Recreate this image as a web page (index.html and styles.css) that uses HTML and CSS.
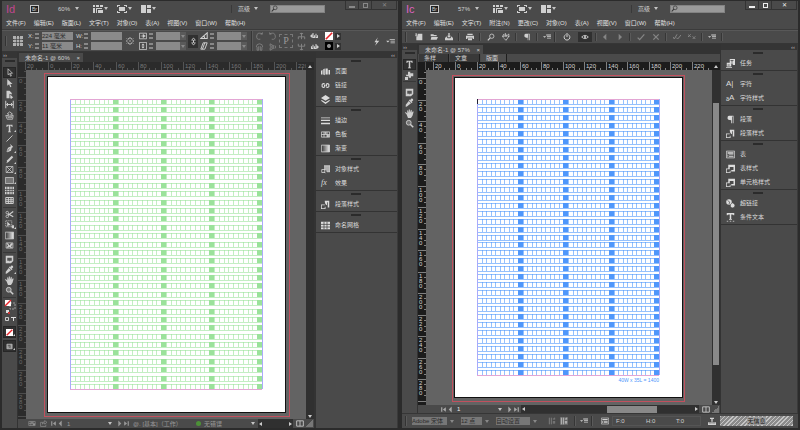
FILE: index.html
```html
<!DOCTYPE html>
<html lang="zh-CN">
<head>
<meta charset="utf-8">
<title>未命名-1</title>
<link rel="stylesheet" href="styles.css">
</head>
<body>
<svg class="sprite" aria-hidden="true">
  <symbol id="views" viewBox="0 0 10 10"><path d="M0 1h2v2H0zM3 1h3v2H3zM7 1h3v2H7zM0 4h2v5H0zM3 4h6v1H4v4H3zM5 6h5v3H5z" fill="currentColor"/></symbol>
  <symbol id="screen" viewBox="0 0 10 10"><path d="M2 3h6v4H2zM0 1h3v1H1v1H0zM7 1h3v2H9V2H7zM0 7h1v1h2v1H0zM9 7h1v2H7V8h2z" fill="currentColor"/></symbol>
  <symbol id="arrange" viewBox="0 0 10 10"><path d="M0 1h5v8H0zM6 1h4v3H6zM6 5h4v4H6z" fill="currentColor"/></symbol>
  <symbol id="search" viewBox="0 0 10 10"><circle cx="6" cy="4" r="2.7" fill="none" stroke="currentColor"/><path d="M4 6L1 9.3" stroke="currentColor" stroke-width="1.5"/></symbol>
  <symbol id="refpoint" viewBox="0 0 10 12"><path d="M2 3h6v6H2zM5 3v6M2 6h6" fill="none" stroke="currentColor" stroke-width=".6"/><path d="M0 1h3v3H0zM4 1h2v3H4zM7 1h3v3H7zM0 5h3v2H0zM7 5h3v2H7zM0 8h3v3H0zM4 8h2v3H4zM7 8h3v3H7zM4 5h2v2H4z" fill="currentColor"/></symbol>
  <symbol id="link" viewBox="0 0 10 10"><path d="M3 3V2q2-2 4 0v1M3 7v1q2 2 4 0V7M0 5h2M8 5h2M1 2l1 1M9 2L8 3M1 8l1-1M9 8L8 7M5 4v2" fill="none" stroke="currentColor" stroke-width="1.1"/></symbol>
  <symbol id="chain" viewBox="0 0 10 12"><path d="M3 5V3q2-3 4 0v2M3 7v2q2 3 4 0V7M5 4v4" fill="none" stroke="currentColor" stroke-width="1.4"/></symbol>
  <symbol id="scalex" viewBox="0 0 10 10"><path d="M.5 1.500h9v7h-9z" fill="none" stroke="currentColor"/><path d="M2 5h3V3l3 2-3 2V5" fill="currentColor" stroke="currentColor" stroke-width=".8"/></symbol>
  <symbol id="scaley" viewBox="0 0 10 10"><path d="M.5 .5h9v9h-9z" fill="none" stroke="currentColor"/><path d="M5 2l2 2H3zM5 8l2-2H3zM4.500 4h1v2h-1z" fill="currentColor"/></symbol>
  <symbol id="angle" viewBox="0 0 10 10"><path d="M9 1v7H1zM6 8L5 5" fill="none" stroke="currentColor" stroke-width="1.3"/></symbol>
  <symbol id="shear" viewBox="0 0 10 10"><path d="M4 1h5L6 9H1zM6 1L3 9" fill="none" stroke="currentColor" stroke-width="1.2"/></symbol>
  <symbol id="rotate" viewBox="0 0 10 10"><path d="M8 2Q2 0 1.500 5T6 9" fill="none" stroke="currentColor"/><path d="M6 3h3V0z" fill="currentColor"/></symbol>
  <symbol id="fliph" viewBox="0 0 10 10"><path d="M1 5q0-4 4-4t4 4M2 5v4h2V4M8 5v4H6V4" fill="none" stroke="currentColor"/></symbol>
  <symbol id="flipv" viewBox="0 0 10 10"><path d="M2 1l5 3-5 0zM2 9l5-3H2zM8 3q2 2 0 4" fill="none" stroke="currentColor"/></symbol>
  <symbol id="tree" viewBox="0 0 10 10"><path d="M5 1v4M1 9V6h8v3M5 5v4M3 2h4" fill="none" stroke="currentColor" stroke-width="1.200"/></symbol>
  <symbol id="next" viewBox="0 0 12 10"><path d="M1 5h3M4 1v6h2V4M8 2v5h2V4M3 3L1 5l2 2" fill="none" stroke="currentColor" stroke-width="1.4"/></symbol>
  <symbol id="bolt" viewBox="0 0 10 12"><path d="M7 0L2 7h3l-2 5 6-7H5z" fill="currentColor"/></symbol>
  <symbol id="menu" viewBox="0 0 10 8"><path d="M0 3h4L2 5zM4 1h6v1H4zM5 3h5v1H5zM5 5h5v1H5z" fill="currentColor"/></symbol>
  <symbol id="none" viewBox="0 0 10 10"><path d="M0 0h10v10H0z" fill="#fff"/><path d="M1 9L9 1" stroke="#e8242a" stroke-width="2"/></symbol>
  <symbol id="stroke" viewBox="0 0 10 10"><path d="M0 0h10v10H0z" fill="#000"/><path d="M3.500 3.500h3v3h-3z" fill="#555" stroke="#ddd"/></symbol>
  <symbol id="select" viewBox="0 0 10 12"><path d="M3 1v8l2-1.500L6.500 11l1-.6L6 7h3z" fill="none" stroke="currentColor"/></symbol>
  <symbol id="direct" viewBox="0 0 10 12"><path d="M2 0v9l2.500-2L6 11l1.500-.8L6 6.500h3z" fill="currentColor"/></symbol>
  <symbol id="pagetool" viewBox="0 0 10 12"><path d="M1 1h4l3 3v2L5 5v6H1zM6 6l4 4-2 .5V12L6 11z" fill="currentColor"/></symbol>
  <symbol id="gap" viewBox="0 0 12 12"><path d="M1 1v10M11 1v10M2 6h8M4 4L2 6l2 2M8 4l2 2-2 2" fill="none" stroke="currentColor" stroke-width="1.300"/></symbol>
  <symbol id="collector" viewBox="0 0 12 12"><path d="M1 6l2 5h7l1-5H9v3H4V6zM5 7h3V4h2L6 1 3 4h2z" fill="none" stroke="currentColor"/></symbol>
  <symbol id="type" viewBox="0 0 10 12"><path d="M1 1h8v3H8q0-2-2-2v8h1v1H3v-1h1V2Q2 2 2 4H1z" fill="currentColor"/></symbol>
  <symbol id="line" viewBox="0 0 10 12"><path d="M1 10L9 2" stroke="currentColor" stroke-width="1.200"/></symbol>
  <symbol id="pen" viewBox="0 0 10 12"><path d="M6 0l4 4-2 1-1 4-5 2-1-1 2-5 4-2-1-2z" fill="currentColor"/><path d="M2 10l3-4" stroke="#444" stroke-width=".8"/></symbol>
  <symbol id="pencil" viewBox="0 0 10 12"><path d="M8 1l2 2-6 6-3 2 1-4z" fill="currentColor"/></symbol>
  <symbol id="frame" viewBox="0 0 12 12"><path d="M1.500 2h9v8h-9zM2 2l8 8M10 2l-8 8" fill="none" stroke="currentColor"/></symbol>
  <symbol id="rect" viewBox="0 0 12 12"><path d="M.5 2h11v8H.5z" fill="#777" stroke="currentColor"/></symbol>
  <symbol id="gridh" viewBox="0 0 12 12"><path d="M0 1h2v3H0zM3 1h3v3H3zM7 1h2v3H7zM10 1h2v3h-2zM0 5h2v2H0zM3 5h3v2H3zM7 5h2v2H7zM10 5h2v2h-2zM0 8h2v3H0zM3 8h3v3H3zM7 8h2v3H7zM10 8h2v3h-2z" fill="currentColor"/></symbol>
  <symbol id="gridv" viewBox="0 0 12 12"><path d="M1 2h10v8H1zM1 5h10M1 7.500h10M4.500 2v8M8 2v8" fill="none" stroke="currentColor" stroke-width="1.300"/></symbol>
  <symbol id="scissors" viewBox="0 0 12 12"><path d="M11 2L4 7M11 9L4 5" stroke="currentColor" stroke-width="1.500"/><circle cx="3" cy="3.500" r="1.700" fill="none" stroke="currentColor"/><circle cx="3" cy="8.500" r="1.700" fill="none" stroke="currentColor"/></symbol>
  <symbol id="transform" viewBox="0 0 12 12"><path d="M1 1h8v8H1z" fill="none" stroke="currentColor" stroke-dasharray="1.500 1"/><path d="M3 2v7l2-2h3zM9 7h3v4H9z" fill="currentColor"/></symbol>
  <linearGradient id="fade"><stop stop-color="#333"/><stop offset="1" stop-color="#eee"/></linearGradient>
  <symbol id="gradient" viewBox="0 0 12 12"><path d="M.5 1.500h11v9H.5z" fill="url(#fade)" stroke="currentColor"/></symbol>
  <symbol id="feather" viewBox="0 0 12 12"><path d="M1.500 2.500h9v7h-9z" fill="none" stroke="currentColor"/><path d="M2 3h2l2 3 2-3h2v2L8 7l2 2H7L6 8 4 9H2l2-3z" fill="currentColor"/></symbol>
  <symbol id="note" viewBox="0 0 12 12"><path d="M1 1h10v7L8 11H1z" fill="currentColor"/><path d="M3 3.500h6v4H7L6 9V7.500H3z" fill="#555"/></symbol>
  <symbol id="dropper" viewBox="0 0 12 12"><path d="M8 1q3-1 3 2L9 5l1 1-1 1-4-4 1-1 1 1zM5 4l3 3-5 4-2 1V9z" fill="currentColor"/></symbol>
  <symbol id="hand" viewBox="0 0 12 12"><path d="M2 7L0 5l1-1 2 2V2l1-.5L5 5V.5h1.500V5L8 1l1 .5V5l1.500-2 1 .5L10 9l-2 3H4z" fill="currentColor"/></symbol>
  <symbol id="zoom" viewBox="0 0 12 12"><circle cx="5" cy="5" r="3.200" fill="#777" stroke="currentColor" stroke-width="1.200"/><path d="M7 7l4 4" stroke="currentColor" stroke-width="2"/></symbol>
  <symbol id="position" viewBox="0 0 12 12"><path d="M4 1h3v2h4v4H8v2H5V7H2L1 5h3zM0 8h4v4H0z" fill="currentColor"/></symbol>
  <symbol id="normal" viewBox="0 0 12 12"><path d="M1.500 2h9v8h-9z" fill="#999" stroke="currentColor"/><path d="M3 4h4v3M5 6l3 3" fill="none" stroke="#333"/></symbol>
  <symbol id="pages" viewBox="0 0 12 12"><path d="M0 5l2-1v6H0zM3 3l2-1v9l-2-1zM6 2h3v8H6zM10 4h2v6h-2z" fill="currentColor"/></symbol>
  <symbol id="links" viewBox="0 0 12 12"><path d="M5 4.500Q3.500 2.500 1.500 4.500v3q2 2 3.500 0V6H4M7 7.500q1.500 2 3.500 0v-3q-2-2-3.500 0V6h1" fill="none" stroke="currentColor" stroke-width="1.400"/></symbol>
  <symbol id="layers" viewBox="0 0 12 12"><path d="M6 0l6 4-6 3.500L0 4zM1 6.500L6 9.500l5-3 1 1L6 12 0 7.500z" fill="currentColor"/></symbol>
  <symbol id="lines" viewBox="0 0 12 12"><path d="M0 2h12v1H0zM0 5h12v1.500H0zM0 9h12v2H0z" fill="currentColor"/></symbol>
  <symbol id="swatches" viewBox="0 0 12 12"><path d="M.5 2.500h11v7H.5zM.5 6h11M4 2.500v7M8 2.500v7" fill="none" stroke="currentColor"/><path d="M5 3h2v2H5zM8 7h3v2H8z" fill="currentColor"/></symbol>
  <symbol id="style" viewBox="0 0 12 12"><path d="M4 1h8v8H7V7H4z" fill="currentColor" opacity=".7"/><path d="M4 1h8v8H8M1 6h4v4H1zM4 9l2 2" fill="none" stroke="currentColor"/></symbol>
  <symbol id="parastyle" viewBox="0 0 12 12"><path d="M5 1h6v9H9V3H8v4Q5 6 5 1zM0 6h5v1H1v4h4V9h1v3H0z" fill="currentColor"/></symbol>
  <symbol id="namedgrid" viewBox="0 0 12 12"><path d="M0 1h12v10H0z" fill="currentColor"/><path d="M0 4.500h12M0 8h12M4 1v10M8 1v10" stroke="#444"/></symbol>
  <symbol id="task" viewBox="0 0 12 12"><path d="M5 0h7v8H9V6H5zM1 5h6v5H1zM0 11h8v1H0z" fill="currentColor"/><path d="M6 2h4M8 2v3M2 8h3" stroke="#444"/></symbol>
  <symbol id="pilcrow" viewBox="0 0 12 12"><path d="M4 1h6v10H9V2H8v9H7V7Q2 7 2 4t2-3z" fill="currentColor"/></symbol>
  <symbol id="table" viewBox="0 0 12 12"><path d="M.5 1.500h11v9H.5z" fill="none" stroke="currentColor"/><path d="M2 3h8v2H2zM4 6h6v1H4zM4 8h6v1H4zM2 6h1v3H2z" fill="currentColor"/></symbol>
  <symbol id="tablestyle" viewBox="0 0 12 12"><path d="M3 1h9v9H7V8h3V4H5v2H3zM0 6h5v1H1v4h4V9h1v3H0z" fill="currentColor"/></symbol>
  <symbol id="hyper" viewBox="0 0 12 12"><circle cx="4" cy="4" r="3.700" fill="currentColor"/><path d="M2 2l3 2-1 3" fill="none" stroke="#555"/><path d="M6 7l3-2 3 3-1 3-3 1-2-2z" fill="currentColor" stroke="#444" stroke-width=".6"/></symbol>
  <symbol id="condtext" viewBox="0 0 12 12"><path d="M1 0h10v3h-1q0-1-2-1H7v6h1v1H4V8h1V2H4Q2 2 2 3H1z" fill="currentColor"/><path d="M1 11h2M5 11h2M9 11h2" stroke="currentColor"/></symbol>
  <symbol id="new" viewBox="0 0 12 12"><path d="M4 1h7v10H2V5h2z" fill="currentColor"/><path d="M0 1l4 3M2 0v4M0 4h3" stroke="currentColor"/></symbol>
  <symbol id="open" viewBox="0 0 12 12"><path d="M1 2h4l1 1h4v2H1zM2 6h10l-2 4H1z" fill="currentColor"/></symbol>
  <symbol id="save" viewBox="0 0 12 12"><path d="M5 0h2v4h2L6 7 3 4h2zM0 8l2-3 2 3h4l2-3 2 3v3H0z" fill="currentColor"/></symbol>
  <symbol id="print" viewBox="0 0 12 12"><path d="M2 1h8v2H2zM0 4h12v5h-2V7H2v2H0zM3 8h6v3H3z" fill="currentColor"/></symbol>
  <symbol id="spell" viewBox="0 0 12 12"><path d="M1 4l2-2v4H1V4M5 0v5h2V3H5M11 2H9v3h2M3 8l3 3 5-7" fill="none" stroke="currentColor" stroke-width="1.200"/></symbol>
  <symbol id="power" viewBox="0 0 12 12"><path d="M4 2.500A4.300 4.300 0 1 0 8 2.500M6 0v6" fill="none" stroke="currentColor" stroke-width="1.500"/></symbol>
  <symbol id="eye" viewBox="0 0 12 12"><path d="M1 6q5-5 10 0-5 5-10 0z" fill="none" stroke="currentColor" stroke-width="1.300"/><circle cx="6" cy="6" r="1.600" fill="currentColor"/></symbol>
  <symbol id="prev" viewBox="0 0 12 12"><path d="M8 1v10L3 6z" fill="currentColor"/></symbol>
  <symbol id="fwd" viewBox="0 0 12 12"><path d="M4 1v10l5-5z" fill="currentColor"/></symbol>
  <symbol id="check" viewBox="0 0 12 12"><path d="M1 7l3 3 7-8" fill="none" stroke="currentColor" stroke-width="1.900"/></symbol>
  <symbol id="cross" viewBox="0 0 12 12"><path d="M2 2l8 8M10 2l-8 8" stroke="currentColor" stroke-width="1.900"/></symbol>
  <symbol id="checks" viewBox="0 0 12 12"><path d="M0 6l2 3 4-7M5 7l2 2 5-6" fill="none" stroke="currentColor" stroke-width="1.500"/></symbol>
  <symbol id="crosses" viewBox="0 0 12 12"><path d="M0 2l4 4M4 2L0 6M7 5l4 4M11 5L7 9" stroke="currentColor" stroke-width="1.500"/></symbol>
  <symbol id="split" viewBox="0 0 12 10"><path d="M1 1h10v8H1zM6 1v8" fill="none" stroke="currentColor" stroke-width="1.300"/></symbol>
  <symbol id="first" viewBox="0 0 12 12"><path d="M2 2h2v8H2zM10 2v8L5 6z" fill="currentColor"/></symbol>
  <symbol id="last" viewBox="0 0 12 12"><path d="M8 2h2v8H8zM2 2v8l5-4z" fill="currentColor"/></symbol>
  <symbol id="export" viewBox="0 0 12 12"><path d="M1 4h4M1 4v7h9V8M4 7q0-4 4-4V1l4 3-4 3V5Q6 5 4 7z" fill="none" stroke="currentColor"/></symbol>
  <symbol id="cols" viewBox="0 0 12 12"><path d="M2 1v10M5 1v10M8 2v2M8 6v4M10 1v3M10 6v4" stroke="currentColor" stroke-width="1.200"/></symbol>
  <symbol id="depth" viewBox="0 0 12 12"><path d="M0 8h12v4H0zM5 3h2v4H5zM3 1h6v2H3z" fill="currentColor"/><path d="M2 8v2M4 8v2M6 8v2M8 8v2M10 8v2" stroke="#444" stroke-width=".7"/></symbol>
</svg>

<div class="desk">
<section class="app id">
  <header class="titlebar">
    <span class="logo">Id</span>
    <button class="br">Br</button>
    <button class="zoomlevel">60%<i class="dn"></i></button>
    <button class="view"><svg><use href="#views"/></svg><i class="dn"></i></button>
    <button class="view"><svg><use href="#screen"/></svg><i class="dn"></i></button>
    <button class="view"><svg><use href="#arrange"/></svg><i class="dn"></i></button>
    <div class="workspace"><button>高级<i class="dn"></i></button><label class="search"><svg><use href="#search"/></svg><input type="text" aria-label="搜索"></label></div>
    <div class="winbtns"><button><i class="min"></i></button><button><i class="max"></i></button><button>✕</button></div>
  </header>
  <nav class="menubar"><button>文件(F)</button><button>编辑(E)</button><button>版面(L)</button><button>文字(T)</button><button>对象(O)</button><button>表(A)</button><button>视图(V)</button><button>窗口(W)</button><button>帮助(H)</button></nav>
  <div class="control">
    <i class="grip"></i>
    <svg class="ref"><use href="#refpoint"/></svg>
    <div class="fields">
      <label for="x">X:</label><i class="spin"></i><input id="x" value="224 毫米">
      <label for="w">W:</label><i class="spin"></i><input id="w">
      <label for="y">Y:</label><i class="spin"></i><input id="y" value="11 毫米">
      <label for="h">H:</label><i class="spin"></i><input id="h">
    </div>
    <svg class="ic link"><use href="#link"/></svg>
    <div class="scale">
      <svg class="ic"><use href="#scalex"/></svg><i class="spin"></i><input aria-label="X 缩放"><button class="drop"><i class="dn"></i></button>
      <svg class="ic"><use href="#scaley"/></svg><i class="spin"></i><input aria-label="Y 缩放"><button class="drop"><i class="dn"></i></button>
    </div>
    <button class="chain"><svg><use href="#chain"/></svg></button>
    <div class="scale">
      <svg class="ic"><use href="#angle"/></svg><i class="spin"></i><input aria-label="旋转"><button class="drop"><i class="dn"></i></button>
      <svg class="ic"><use href="#shear"/></svg><i class="spin"></i><input aria-label="切变"><button class="drop"><i class="dn"></i></button>
    </div>
    <i class="sep"></i>
    <div class="pair dim"><svg><use href="#rotate"/></svg><svg class="mirror"><use href="#rotate"/></svg><svg><use href="#fliph"/></svg><svg><use href="#flipv"/></svg></div>
    <span class="pbox">P</span>
    <div class="pair"><svg class="dim"><use href="#tree"/></svg><svg><use href="#next"/></svg><svg class="dim turn"><use href="#tree"/></svg><svg class="mirror"><use href="#next"/></svg></div>
    <div class="pair sw"><svg><use href="#none"/></svg><button><i class="rt"></i></button><svg><use href="#stroke"/></svg><button><i class="rt"></i></button></div>
    <button class="bolt"><svg><use href="#bolt"/></svg></button>
    <button class="flyout"><svg><use href="#menu"/></svg></button>
  </div>
  <div class="work">
    <aside class="toolbox">
      <div class="boxhead">››</div><i class="bar"></i>
      <div class="tools g1"><button class="on"><svg><use href="#select"/></svg></button><button><svg><use href="#direct"/></svg></button><button><svg><use href="#pagetool"/></svg></button><button><svg><use href="#gap"/></svg></button><button><svg><use href="#collector"/></svg></button></div>
      <div class="tools g2"><button class="more"><svg><use href="#type"/></svg></button><button><svg><use href="#line"/></svg></button><button class="more"><svg><use href="#pen"/></svg></button><button class="more"><svg><use href="#pencil"/></svg></button><button class="more"><svg><use href="#frame"/></svg></button><button class="more"><svg><use href="#rect"/></svg></button><button><svg><use href="#gridh"/></svg></button><button><svg><use href="#gridv"/></svg></button></div>
      <div class="tools g3"><button><svg><use href="#scissors"/></svg></button><button class="more"><svg><use href="#transform"/></svg></button><button><svg><use href="#gradient"/></svg></button><button><svg><use href="#feather"/></svg></button></div>
      <div class="tools g3"><button><svg><use href="#note"/></svg></button><button class="more"><svg><use href="#dropper"/></svg></button><button><svg><use href="#hand"/></svg></button><button><svg><use href="#zoom"/></svg></button></div>
      <svg class="fills" viewBox="0 0 12 24"><path d="M6 4h5v6H6z" fill="none" stroke="#999" stroke-dasharray="2 1"/><path d="M1 1h6v6H1z" fill="#fff"/><path d="M1 7l6-6" stroke="#e8242a" stroke-width="1.500"/><path d="M2 11h3v3H2z" fill="#ddd"/><path d="M4 13h2v2H4z" fill="#c33"/><path d="M1.500 18.500h3v3h-3z" fill="none" stroke="#ccc"/><path d="M7 18h5v1H7zM9 18h1v4H9z" fill="#ddd"/></svg>
      <div class="tools g4"><button class="on more"><svg><use href="#none"/></svg></button></div>
      <div class="tools g4"><button class="on more"><svg><use href="#normal"/></svg></button></div>
    </aside>
    <main class="doc">
      <div class="tabs"><button class="tab">未命名-1 @ 60%<span>×</span></button></div>
      <div class="rulerrow"><i class="corner"></i><svg class="ruler" data-dir="h" data-zero="22" data-scale="237" data-count="12"></svg><i class="up"></i></div>
      <div class="stage">
        <svg class="ruler" data-dir="v" data-zero="7" data-scale="237" data-count="16"></svg>
        <svg class="canvas" data-page="22,7,237,335" data-bleed="18,3,245,343" data-grid="44,29,192,290" data-color="#9be29b"></svg>
        <div class="vscroll"><i class="dnw"></i></div>
      </div>
      <footer class="pager">
        <svg class="wide"><use href="#swatches"/></svg><svg class="exp"><use href="#export"/></svg><svg><use href="#first"/></svg><svg><use href="#prev"/></svg><span class="num">1</span><i class="dn"></i><svg><use href="#fwd"/></svg><svg><use href="#last"/></svg>
        <span class="profile">@. [基本]（工作）</span><i class="dot"></i><span>无错误</span><i class="dn err"></i>
        <div class="hscroll"><i class="lt"></i><i class="rt"></i></div><svg class="splitter"><use href="#split"/></svg><i class="resize"></i>
      </footer>
    </main>
    <aside class="dock">
      <div class="boxhead">‹‹</div>
      <div class="group"><button><svg><use href="#pages"/></svg>页面</button><button><svg><use href="#links"/></svg>链接</button><button><svg><use href="#layers"/></svg>图层</button></div>
      <div class="group"><button><svg><use href="#lines"/></svg>描边</button><button><svg><use href="#swatches"/></svg>色板</button><button><svg><use href="#gradient"/></svg>渐变</button></div>
      <div class="group"><button><svg><use href="#style"/></svg>对象样式</button><button><b class="fx">fx</b>效果</button></div>
      <div class="group"><button><svg><use href="#parastyle"/></svg>段落样式</button></div>
      <div class="group"><button><svg><use href="#namedgrid"/></svg>命名网格</button></div>
    </aside>
  </div>
</section>

<section class="app ic2">
  <header class="titlebar">
    <span class="logo">Ic</span>
    <button class="br">Br</button>
    <button class="zoomlevel">57%<i class="dn"></i></button>
    <button class="view"><svg><use href="#views"/></svg><i class="dn"></i></button>
    <button class="view"><svg><use href="#screen"/></svg><i class="dn"></i></button>
    <button class="view"><svg><use href="#arrange"/></svg><i class="dn"></i></button>
    <div class="workspace"><button>高级<i class="dn"></i></button><label class="search"><svg><use href="#search"/></svg><input type="text" aria-label="搜索"></label></div>
    <div class="winbtns active"><button><i class="min"></i></button><button><i class="max"></i></button><button>✕</button></div>
  </header>
  <nav class="menubar"><button>文件(F)</button><button>编辑(E)</button><button>文字(T)</button><button>附注(N)</button><button>更改(C)</button><button>对象(O)</button><button>表(A)</button><button>视图(V)</button><button>窗口(W)</button><button>帮助(H)</button></nav>
  <div class="cmdbar">
    <i class="grip"></i>
    <button><svg><use href="#new"/></svg></button><button><svg><use href="#open"/></svg></button><button><svg><use href="#save"/></svg></button><i class="sep"></i>
    <button><svg><use href="#print"/></svg></button><i class="sep"></i>
    <button><svg><use href="#search"/></svg></button><button><svg><use href="#spell"/></svg></button><i class="sep"></i>
    <button><svg><use href="#pilcrow"/></svg></button><i class="sep"></i>
    <button class="end"><svg><use href="#menu"/></svg></button><i class="grip"></i>
    <button class="pw"><svg><use href="#power"/></svg></button><button class="eye"><svg><use href="#eye"/></svg></button><i class="sep tight"></i>
    <button class="dim"><svg><use href="#prev"/></svg></button><button class="dim"><svg><use href="#fwd"/></svg></button><i class="sep"></i>
    <button class="dim"><svg><use href="#check"/></svg></button><button class="dim"><svg><use href="#cross"/></svg></button><i class="sep"></i>
    <button class="dim"><svg><use href="#checks"/></svg></button><button class="dim"><svg><use href="#crosses"/></svg></button><i class="sep"></i>
    <button class="end"><svg><use href="#menu"/></svg></button><i class="sep"></i>
  </div>
  <div class="work">
    <aside class="toolbox">
      <div class="boxhead">››</div><i class="bar"></i>
      <div class="tools h1"><button class="on"><svg><use href="#type"/></svg></button><button><svg><use href="#position"/></svg></button></div>
      <div class="tools h2"><button><svg><use href="#note"/></svg></button><button><svg><use href="#dropper"/></svg></button><button><svg><use href="#hand"/></svg></button><button><svg><use href="#zoom"/></svg></button></div>
    </aside>
    <main class="doc">
      <div class="tabs"><button class="tab">未命名-1 @ 57%<span>×</span></button></div>
      <div class="viewtabs"><button>条样</button><button>文章</button><button class="cur">版面</button></div>
      <div class="rulerrow"><i class="corner"></i><svg class="ruler" data-dir="h" data-zero="29" data-scale="226" data-count="12"></svg><i class="up"></i></div>
      <div class="stage">
        <svg class="ruler" data-dir="v" data-zero="8" data-scale="226" data-count="16"></svg>
        <svg class="canvas" data-page="29,8,227,319" data-bleed="26,5,232,326" data-grid="51,29,182,276" data-color="#4f97fb" data-note="40W x 35L = 1400"></svg>
        <div class="vscroll"><i class="thumb"></i><i class="dnw"></i></div>
      </div>
      <footer class="pager">
        <svg><use href="#first"/></svg><svg><use href="#prev"/></svg><span class="num">1</span><i class="dn"></i><svg><use href="#fwd"/></svg><svg><use href="#last"/></svg>
        <div class="hscroll"><i class="lt"></i><i class="thumb"></i><i class="rt"></i></div><svg class="splitter"><use href="#split"/></svg><i class="resize"></i>
      </footer>
    </main>
    <aside class="dock">
      <div class="boxhead">‹‹</div>
      <div class="group"><button><svg><use href="#task"/></svg>任务</button></div>
      <div class="group"><button><b class="ch">A|</b>字符</button><button><b class="ch">ₐA</b>字符样式</button></div>
      <div class="group"><button><svg><use href="#pilcrow"/></svg>段落</button><button><svg><use href="#parastyle"/></svg>段落样式</button></div>
      <div class="group"><button><svg><use href="#table"/></svg>表</button><button><svg><use href="#tablestyle"/></svg>表样式</button><button><svg><use href="#tablestyle"/></svg>单元格样式</button></div>
      <div class="group"><button><svg><use href="#hyper"/></svg>超链接</button><button><svg><use href="#condtext"/></svg>条件文本</button></div>
    </aside>
  </div>
  <footer class="copyfit">
    <i class="grip"></i>
    <select class="s1" aria-label="字体"><option>Adobe 宋体</option></select><i class="dn"></i>
    <select class="s2" aria-label="字号"><option>12 点</option></select><i class="dn"></i>
    <select class="s3" aria-label="行距"><option>自动设置</option></select><i class="dn"></i>
    <svg class="c1"><use href="#cols"/></svg><svg class="c2"><use href="#cols"/></svg><i class="sep"></i><svg class="c3"><use href="#menu"/></svg><i class="grip"></i>
    <svg class="c4"><use href="#table"/></svg>
    <div class="counts"><span>F:0</span><span>H:0</span><span>T:0</span></div>
    <svg class="c5"><use href="#depth"/></svg>
    <div class="info"><span>无信息</span></div>
  </footer>
</section>
</div>
<script src="script.js"></script>
</body>
</html>
```
FILE: styles.css
```css
* { box-sizing: border-box; }
body { margin: 0; background: #2a2a2a; color: #d0d0d0; font: 6px/8px "Liberation Sans", "Noto Sans CJK SC", sans-serif; }
button, input, select { font: inherit; color: inherit; margin: 0; padding: 0; border: 0; background: none; border-radius: 0; appearance: none; white-space: nowrap; }
i { font-style: normal; display: block; flex: none; }
svg { display: block; flex: none; }
.sprite { position: absolute; width: 0; height: 0; }
.desk { display: flex; height: 100vh; }
.app { flex: 1; min-width: 0; display: flex; flex-direction: column; background: #4a4a4a; border: solid #2b2b2b; border-width: 1px 2px 2px; }
.dim { color: #858585; }

.dn { border: 2px solid transparent; border-top: 3px solid #c4c4c4; border-bottom: 0; }
.dnw, .up { border: 2px solid transparent; }
.dnw { border-top: 3px solid #ccc; border-bottom: 0; }
.up { border-bottom: 3px solid #ccc; border-top: 0; }
.rt, .lt { border: 2px solid transparent; }
.rt { border-left: 3px solid #ccc; border-right: 0; }
.lt { border-right: 3px solid #ccc; border-left: 0; }
.grip { width: 2px; height: 10px; background: #333; border-right: 1px solid #5a5a5a; }
.sep { width: 2px; height: 10px; background: #363636; border-right: 1px solid #5a5a5a; }

.titlebar { display: flex; align-items: center; height: 15px; padding-left: 4px; }
.logo { width: 24px; font-size: 11px; line-height: 14px; color: #c2468f; }
.ic2 .logo { color: #df62c0; }
.br { width: 9px; height: 8px; margin-right: 19px; border: 1px solid #c8c8c8; background: #222; font-size: 5px; line-height: 6px; }
.zoomlevel { display: flex; align-items: center; width: 35px; gap: 5px; }
.view { display: flex; align-items: center; gap: 1px; width: 24px; }
.view svg { width: 10px; height: 10px; }
.workspace { display: flex; align-items: center; margin-left: auto; margin-right: 20px; border-left: 1px solid #393939; padding-left: 6px; }
.workspace button { display: flex; align-items: center; gap: 4px; width: 32px; }
.search { display: flex; align-items: center; width: 55px; height: 8px; background: #999; border: 1px solid #828282; color: #333; }
.search svg { width: 7px; height: 7px; }
.search input { width: 40px; height: 6px; }
.winbtns { display: flex; align-self: flex-start; height: 9px; margin-right: 1px; border: 1px solid #333; border-top: 0; color: #888; }
.winbtns.active { color: #eee; }
.winbtns button { display: flex; align-items: center; justify-content: center; width: 13px; height: 8px; border-right: 1px solid #333; }
.winbtns button:last-child { width: 24px; border: 0; }
.min { width: 6px; height: 2px; margin-top: 3px; background: currentColor; }
.max { width: 5px; height: 5px; border: 1px solid currentColor; }
.menubar { display: flex; gap: 8px; height: 14px; padding: 0 4px; align-items: center; border-bottom: 1px solid #3b3b3b; }
.menubar button { color: #e0e0e0; }

.control { display: flex; align-items: center; height: 22px; padding-left: 3px; border-bottom: 1px solid #363636; border-top: 1px solid #585858; }
.ref { width: 10px; height: 12px; margin: 0 5px 0 6px; color: #b0b0b0; }
.fields, .scale { display: grid; row-gap: 2px; align-items: center; }
.fields { grid-template-columns: 7px 7px 31px 3px 8px 7px 31px; grid-auto-rows: 8px; }
.fields label { line-height: 8px; }
.fields label:nth-of-type(even) { grid-column: 5; }
.control input { width: 100%; height: 8px; background: #8a8a8a; color: #2c2c2c; line-height: 8px; }
.spin { width: 4px; height: 6px; background: linear-gradient(#888 2px, #4a4a4a 2px, #4a4a4a 4px, #888 4px); }
.ic { width: 8px; height: 8px; }
.link { margin: 0 5px 0 4px; }
.scale { grid-template-columns: 10px 7px 24px 7px; grid-auto-rows: 8px; }
.drop { display: flex; justify-content: center; align-items: center; width: 6px; height: 8px; background: #5a5a5a; }
.drop .dn { border-top-color: #888; }
.chain { width: 10px; height: 13px; background: #303030; display: flex; align-items: center; justify-content: center; margin: 0 2px 0 1px; }
.chain svg { width: 7px; height: 9px; }
.control > .sep { height: 20px; margin: 0 2px 0 3px; }
.pair { display: grid; grid-template-columns: 10px 10px; gap: 3px; }
.pair svg { width: 9px; height: 8px; }
.mirror { transform: scaleX(-1); }
.turn { transform: rotate(180deg); }
.pbox { width: 14px; height: 14px; margin: 0 4px 0 1px; border: 1px dashed #777; color: #999; font: 10px/12px "Liberation Serif", serif; text-align: center; }
.sw { grid-template-columns: 8px 6px; gap: 2px; margin-left: 5px; align-items: center; }
.sw svg { width: 8px; height: 8px; }
.sw button { width: 6px; height: 7px; background: #333; padding-left: 2px; }
.bolt { margin-left: auto; }
.bolt svg { width: 7px; height: 9px; }
.flyout { margin: 0 3px 0 6px; }
.flyout svg { width: 9px; height: 7px; }

.cmdbar { display: flex; align-items: center; height: 14px; padding-left: 3px; border-top: 1px solid #585858; border-bottom: 1px solid #363636; }
.cmdbar button { display: flex; align-items: center; justify-content: center; width: 15px; height: 10px; }
.cmdbar svg { width: 8px; height: 8px; }
.cmdbar .grip:first-child { margin-right: 4px; }
.cmdbar .sep { margin: 0 2px; height: 8px; }
.cmdbar .tight { margin: 0; }
.cmdbar .end { width: 14px; }
.cmdbar .pw { margin-left: 3px; }
.cmdbar .eye { width: 14px; background: #303030; margin: 0 3px 0 4px; }

.work { flex: 1; min-height: 0; display: flex; }
.toolbox { width: 16px; display: flex; flex-direction: column; align-items: center; border-right: 1px solid #333; }
.boxhead { height: 6px; line-height: 6px; background: #353535; color: #bbb; align-self: stretch; }
.toolbox .boxhead { padding-left: 1px; }
.bar { width: 10px; height: 2px; margin: 2px 0 4px; background: #2b2b2b; }
.tools { display: grid; grid-auto-rows: 1fr; width: 13px; padding: 1px 0; border-bottom: 1px solid #383838; }
.tools button { position: relative; display: flex; align-items: center; justify-content: center; color: #cecece; }
.tools svg { width: 9px; height: 9px; }
.tools .on { background: #303030; border: 1px solid #272727; }
.more::after { content: ""; position: absolute; right: 0; bottom: 1px; border: 1px solid #ccc; border-top-color: transparent; border-left-color: transparent; }
.g1 { height: 56px; border: 0; }
.g2 { height: 86px; }
.g3 { height: 45px; }
.fills { width: 12px; height: 24px; margin: 1px 0 2px; }
.g4 { height: 14px; border: 0; }
.g4 svg { width: 7px; height: 7px; }
.h1 { height: 24px; margin-bottom: 4px; }
.h2 { height: 44px; border: 0; }

.doc { flex: 1; min-width: 0; display: flex; flex-direction: column; background: #4a4a4a; }
.tabs { display: flex; height: 10px; background: #333; padding: 1px 0 0 1px; }
.tab { display: flex; align-items: center; justify-content: space-between; width: 64px; padding: 0 3px 0 6px; background: #4a4a4a; }
.viewtabs { display: flex; gap: 1px; height: 8px; padding-left: 1px; background: #4a4a4a; }
.viewtabs button { width: 30px; height: 8px; padding-left: 5px; text-align: left; line-height: 8px; background: #393939; border-right: 1px solid #1e1e1e; }
.viewtabs .cur { background: #4f4f4f; width: 26px; }
.rulerrow { display: flex; height: 8px; background: #2b2b2b; color: #777; align-items: center; }
.rulerrow .ruler { flex: 1; width: 0; height: 8px; }
.corner { width: 8px; height: 8px; border-right: 1px solid #555; }
.rulerrow .up { margin: 0 2px; }
.stage { flex: 1; min-height: 0; display: flex; color: #6a6a6a; }
.stage .ruler { width: 8px; height: 100%; background: #2b2b2b; }
.ic2 .rulerrow, .ic2 .stage .ruler { background: #1c1c1c; color: #d4d4d4; }
.ruler text { font-size: 6px; fill: currentColor; }
.canvas { flex: 1; width: 0; height: 100%; background: #636363; }
.vscroll { width: 8px; background: #303030; display: flex; flex-direction: column; align-items: center; padding: 33px 0 1px; }
.vscroll .dnw { margin-top: auto; }
.vscroll .thumb { width: 6px; flex: 0 0 87%; background: #898989; }
.pager { display: flex; align-items: center; height: 9px; color: #999; padding-left: 9px; }
.pager svg { width: 7px; height: 7px; }
.pager .wide { width: 10px; }
.pager .exp { margin: 0 3px; }
.pager .num { width: 44px; padding-left: 3px; }
.pager .num + .dn { margin-right: 4px; }
.profile { width: 66px; padding-left: 3px; white-space: nowrap; }
.dot { width: 5px; height: 5px; border-radius: 50%; background: #4c9137; margin-right: 3px; }
.err { margin-left: auto; margin-right: 3px; }
.hscroll { display: flex; align-items: center; justify-content: space-between; align-self: stretch; width: 35px; padding: 0 1px; background: #303030; }
.pager .splitter { width: 8px; margin: 0 2px 0 3px; color: #ccc; }
.resize { width: 7px; height: 7px; margin-right: 1px; background: linear-gradient(135deg, #4a4a4a 50%, #777 50%); }
.ic2 .pager { height: 8px; padding-left: 22px; color: #aaa; }
.ic2 .num { color: #eee; }
.ic2 .hscroll { flex: 1; margin-left: 1px; }
.ic2 .hscroll .thumb { width: 50px; height: 7px; margin-left: 43px; background: #898989; }

.dock { width: 84px; border-left: 2px solid #333; border-right: 1px solid #3a3a3a; }
.ic2 .dock { width: 78px; border-left-width: 1px; }
.dock .boxhead { text-align: right; padding-right: 2px; }
.group { position: relative; padding-top: 6px; border-bottom: 1px solid #333; }
.group::before { content: ""; position: absolute; top: 2px; left: 50%; width: 10px; height: 2px; margin-left: -6px; background: #2b2b2b; }
.group button { display: flex; align-items: center; width: 100%; height: 14px; padding-left: 5px; color: #dcdcdc; }
.group svg { width: 9px; height: 9px; margin-right: 5px; }
.fx, .ch { width: 14px; text-align: left; font: italic 8px/10px "Liberation Serif", serif; }
.ch { font: 8px/10px "Liberation Sans", sans-serif; }

.copyfit { display: flex; align-items: center; height: 15px; padding-left: 3px; border-top: 1px solid #363636; }
.copyfit .grip:first-child { margin-right: 5px; }
.copyfit select { height: 8px; line-height: 8px; background: #777; color: #2c2c2c; margin-right: 3px; }
.copyfit .dn { border-top-color: #888; margin-right: 7px; }
.copyfit .s1 { width: 35px; }
.copyfit .s2 { width: 21px; }
.copyfit .s3 { width: 34px; }
.copyfit svg { width: 8px; height: 8px; }
.copyfit .c1 { margin: 0 4px 0 4px; color: #888; }
.copyfit .c2 { margin-right: 6px; background: #666; }
.copyfit .c3 { margin: 0 3px 0 4px; }
.copyfit .c4 { margin: 0 3px 0 8px; }
.counts { display: flex; width: 89px; height: 10px; padding-left: 3px; border: 1px solid #555; line-height: 8px; }
.counts span { width: 30px; }
.counts span:last-child { width: 20px; }
.copyfit .c5 { width: 10px; margin: 0 3px 0 6px; }
.info { flex: 1; margin-right: 5px; height: 10px; display: flex; align-items: center; justify-content: center; color: #111; background: repeating-linear-gradient(135deg, #c4c4c4 0 1px, #8b8b8b 1px 3px); }
.info span { background: #a0a0a0; }
```
FILE: script.js
```js
const NS = "http://www.w3.org/2000/svg";

function add(parent, name, attrs, text) {
  const node = document.createElementNS(NS, name);
  for (const key in attrs) node.setAttribute(key, attrs[key]);
  if (text !== undefined) node.textContent = text;
  parent.appendChild(node);
}

// Ruler: a labelled tick every 20 mm, short ticks every 5 mm (page width is 210 mm).
document.querySelectorAll(".ruler").forEach(svg => {
  const { dir, zero, scale, count } = svg.dataset;
  const step = scale * 20 / 210;
  const height = svg.clientHeight || svg.getBoundingClientRect().height;
  let ticks = "";
  for (let i = -2; i < count; i++) {
    const at = Math.round(+zero + i * step);
    for (let k = 0; k < 4; k++) {
      const p = Math.round(at + k * step / 4) + 0.5;
      const from = k ? 6 : 0;
      ticks += dir === "h" ? `M${p} ${from}V8` : `M${from} ${p}H8`;
    }
    if (at < -1) continue;
    const label = String(Math.abs(i * 20));
    if (dir === "h") {
      add(svg, "text", { x: at + 2, y: 6 }, label);
    } else {
      [...label].forEach((c, n) => {
        const y = at + 6 + n * 5;
        if (y < height) add(svg, "text", { x: 1, y }, c);
      });
    }
  }
  add(svg, "path", { d: ticks, stroke: "currentColor", "stroke-opacity": 0.55, fill: "none" });
});

// Page with its bleed outline and a 40 x 35 layout grid; every tenth cell is solid.
document.querySelectorAll(".canvas").forEach(svg => {
  const nums = name => svg.dataset[name].split(",").map(Number);
  const [px, py, pw, ph] = nums("page");
  const [bx, by, bw, bh] = nums("bleed");
  const [gx, gy, gw, gh] = nums("grid");
  const color = svg.dataset.color;
  add(svg, "rect", { x: bx + .5, y: by + .5, width: bw, height: bh, fill: "none", stroke: "#c2505e" });
  add(svg, "rect", { x: px - 1, y: py - 1, width: pw + 2, height: ph + 2, fill: "#111" });
  add(svg, "rect", { x: px, y: py, width: pw, height: ph, fill: "#fff" });
  const cell = gw / 40, high = 5, pitch = (gh - high) / 34;
  let lines = "", rules = "", solid = "";
  for (let r = 0; r < 35; r++) {
    const y = Math.round(gy + r * pitch);
    rules += `M${gx} ${y + .5}h${gw}M${gx} ${y + high + .5}h${gw}`;
    for (let c = 0; c <= 40; c++) {
      const x = gx + c * cell;
      lines += `M${Math.round(x) + .5} ${y}v${high}`;
      if (c % 10 === 9) solid += `M${Math.round(x)} ${y}h5v${high}h-5z`;
    }
  }
  add(svg, "path", { d: rules, stroke: color, "stroke-opacity": .6, fill: "none" });
  add(svg, "path", { d: lines, stroke: color, "stroke-opacity": .6, fill: "none" });
  add(svg, "path", { d: solid, fill: color });
  add(svg, "path", { d: `M${gx + .5} ${gy}v${gh}M${gx + gw + .5} ${gy}v${gh}`, stroke: "#aaaafa", fill: "none" });
  add(svg, "path", { d: `M${gx} ${gy + .5}h${gw}M${gx} ${gy + gh + .5}h${gw}`, stroke: "#e3a6d4", fill: "none" });
  if (svg.dataset.note) {
    add(svg, "path", { d: `M${gx + .5} ${gy}v5`, stroke: "#223", fill: "none" });
    add(svg, "text", { x: gx + gw, y: gy + gh + 7, "text-anchor": "end", fill: color, "font-size": 5 }, svg.dataset.note);
  }
});
```
